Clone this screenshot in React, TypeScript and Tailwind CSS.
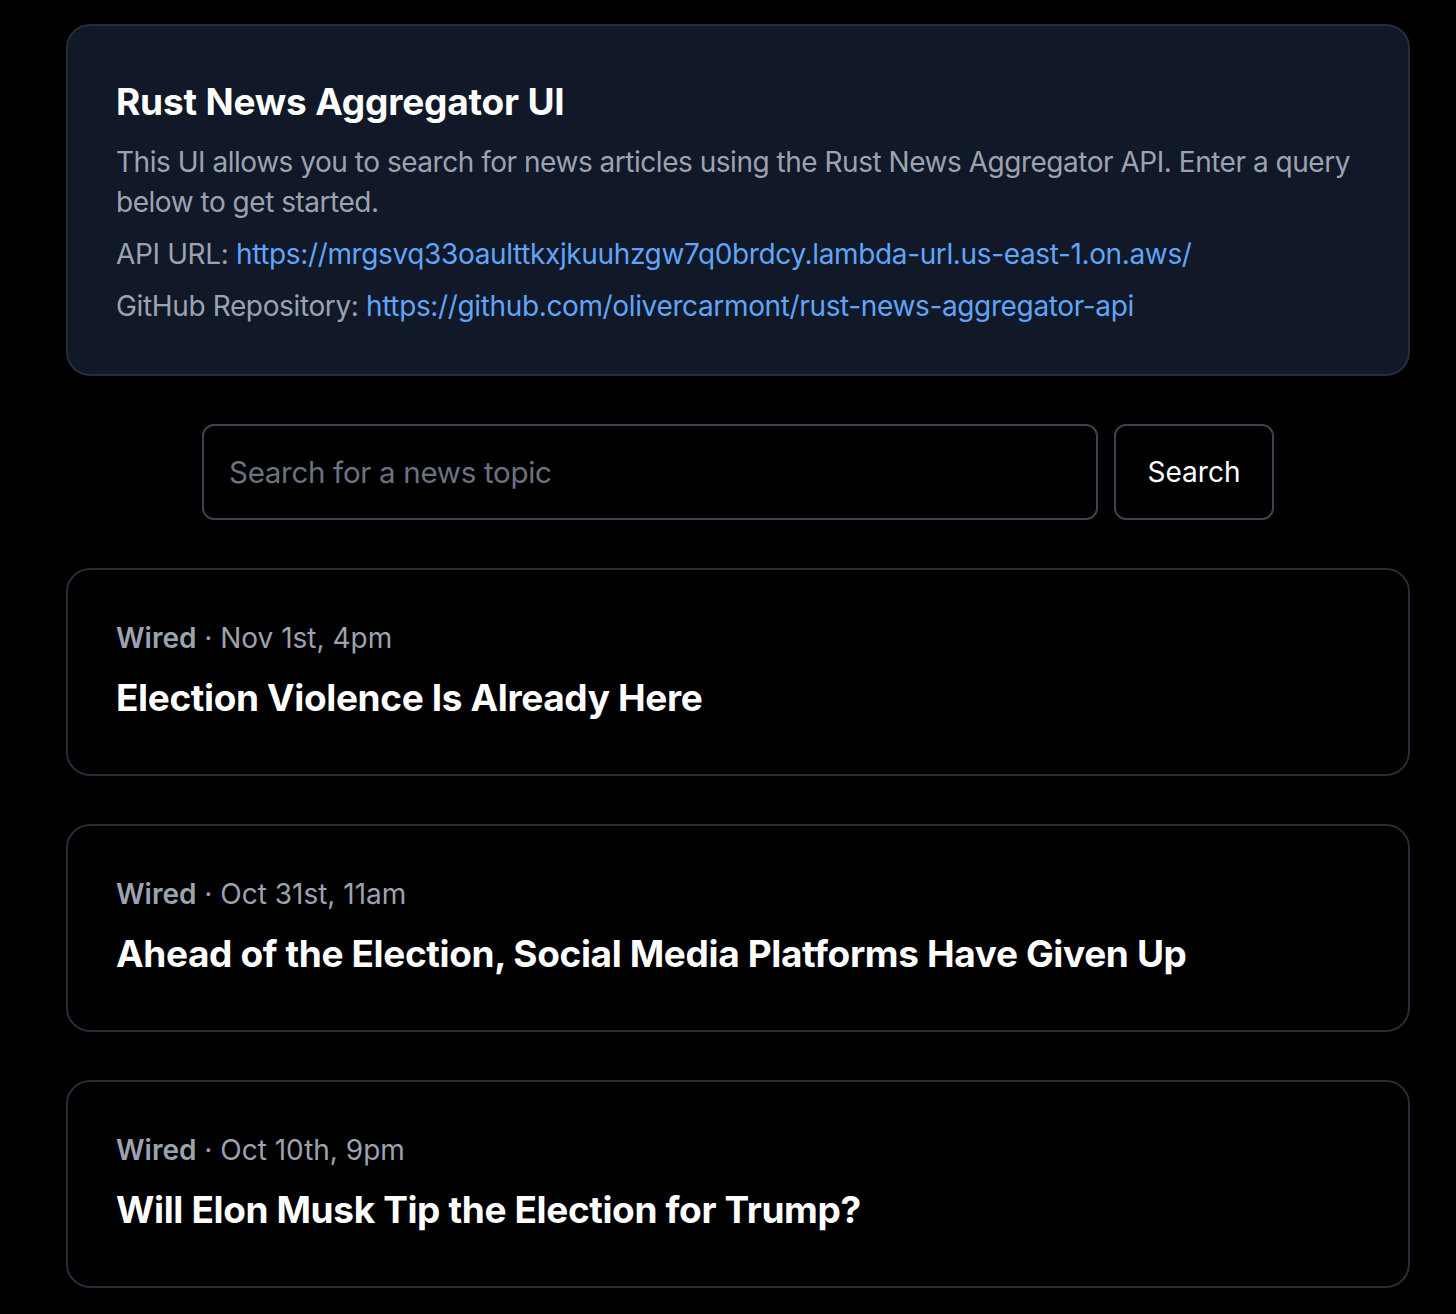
import React from "react";

const articles = [
  { source: "Wired", date: "Nov 1st, 4pm", title: "Election Violence Is Already Here" },
  { source: "Wired", date: "Oct 31st, 11am", title: "Ahead of the Election, Social Media Platforms Have Given Up" },
  { source: "Wired", date: "Oct 10th, 9pm", title: "Will Elon Musk Tip the Election for Trump?" },
];

export default function App() {
  return (
    <div className="min-h-[1314px] bg-black font-['Inter',sans-serif] antialiased">
      <div className="ml-[66px] w-[1344px] pt-[24px] flex flex-col">
        <div className="rounded-[24px] border-2 border-[#252d3b] bg-[#111827] p-[48px]">
          <h1 className="text-[37px] leading-[56px] font-bold tracking-[-0.005em] text-white">Rust News Aggregator UI</h1>
          <p className="mt-[12px] -mr-[4px] text-[28px] leading-[40px] tracking-[-0.017em] text-[#9ca3af]">
            This UI allows you to search for news articles using the Rust News Aggregator API. Enter a query below to get started.
          </p>
          <p className="mt-[12px] text-[28px] leading-[40px] tracking-[-0.013em] text-[#9ca3af]">
            API URL: <a className="text-[#60a5fa]" href="#">https://mrgsvq33oaulttkxjkuuhzgw7q0brdcy.lambda-url.us-east-1.on.aws/</a>
          </p>
          <p className="mt-[12px] text-[28px] leading-[40px] tracking-[-0.013em] text-[#9ca3af]">
            GitHub Repository: <a className="text-[#60a5fa]" href="#">https://github.com/olivercarmont/rust-news-aggregator-api</a>
          </p>
        </div>

        <div className="mt-[48px] flex justify-center gap-[16px]">
          <input
            className="h-[96px] w-[896px] rounded-[12px] border-2 border-[#3a4352] bg-black px-[25px] text-[29.5px] tracking-[-0.01em] text-white placeholder:text-[#6b7280] outline-none"
            placeholder="Search for a news topic"
          />
          <button className="h-[96px] w-[160px] rounded-[12px] border-2 border-[#3a4352] bg-black text-[28px] text-white">
            Search
          </button>
        </div>

        <div className="mt-[48px] flex flex-col gap-[48px]">
          {articles.map((a) => (
            <div key={a.title} className="rounded-[24px] border-2 border-[#252d3b] bg-black p-[48px]">
              <div className="text-[28px] leading-[40px] text-[#9ca3af]">
                <span className="font-semibold">{a.source}</span> · {a.date}
              </div>
              <div className="mt-[12px] text-[37px] leading-[56px] font-bold tracking-[-0.01em] text-white">{a.title}</div>
            </div>
          ))}
        </div>
      </div>
    </div>
  );
}
